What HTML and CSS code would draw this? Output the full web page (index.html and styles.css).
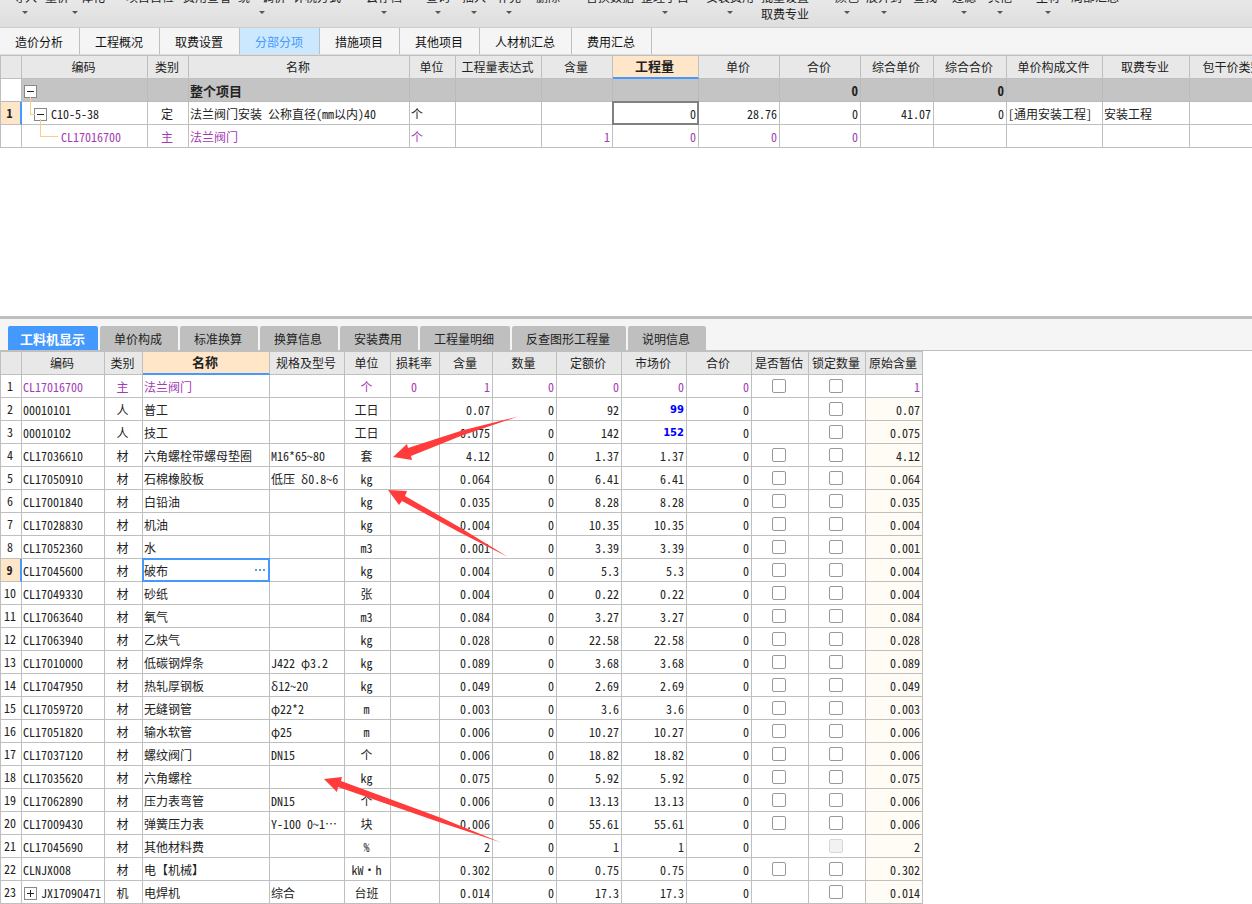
FILE: index.html
```
<!DOCTYPE html>
<html lang="zh-CN">
<head>
<meta charset="utf-8">
<title>分部分项</title>
<link rel="stylesheet" href="styles.css">
</head>
<body>
<header class="toolbar">
  <button class="tool menu">导入</button>
  <button class="tool menu">量价一体化</button>
  <button class="tool">项目自检</button>
  <button class="tool">费用查看</button>
  <button class="tool menu">统一调价</button>
  <button class="tool">计税方式</button>
  <button class="tool menu">云存档</button>
  <button class="tool menu">查询</button>
  <button class="tool menu">插入</button>
  <button class="tool menu">补充</button>
  <button class="tool">删除</button>
  <button class="tool">替换数据</button>
  <button class="tool menu">整理子目</button>
  <button class="tool menu">安装费用</button>
  <button class="tool">批量设置<br>取费专业</button>
  <button class="tool menu">颜色</button>
  <button class="tool menu">展开到</button>
  <button class="tool">查找</button>
  <button class="tool menu">过滤</button>
  <button class="tool menu">其他</button>
  <button class="tool menu">主材</button>
  <button class="tool">局部汇总</button>
</header>
<nav class="pages">
  <button class="page">造价分析</button>
  <button class="page">工程概况</button>
  <button class="page">取费设置</button>
  <button class="page active">分部分项</button>
  <button class="page">措施项目</button>
  <button class="page">其他项目</button>
  <button class="page">人材机汇总</button>
  <button class="page">费用汇总</button>
</nav>
<main class="upper">
<table class="grid items">
<colgroup><col class="w22"><col class="w126"><col class="w41"><col class="w221"><col class="w46"><col class="w86"><col class="w71"><col class="w86"><col class="w81"><col class="w81"><col class="w73"><col class="w73"><col class="w96"><col class="w87"><col class="w88"></colgroup>
<thead><tr><th></th><th>编码</th><th>类别</th><th>名称</th><th>单位</th><th>工程量表达式</th><th>含量</th><th class="current">工程量</th><th>单价</th><th>合价</th><th>综合单价</th><th>综合合价</th><th>单价构成文件</th><th>取费专业</th><th>包干价类别</th></tr></thead>
<tbody>
<tr class="total"><td class="no"></td><td><button class="node" aria-label="折叠"><svg viewBox="0 0 11 11"><path d="M2 5.500h7"/></svg></button></td><td></td><td>整个项目</td><td></td><td></td><td></td><td></td><td></td><td class="n">0</td><td></td><td class="n">0</td><td></td><td></td><td></td></tr>
<tr><td class="no current">1</td><td class="level1"><button class="node" aria-label="折叠"><svg viewBox="0 0 11 11"><path d="M2 5.500h7"/></svg></button>C10-5-38</td><td class="c">定</td><td>法兰阀门安装 公称直径(mm以内)40</td><td>个</td><td></td><td></td><td class="edit gray"><input aria-label="工程量" value="0"></td><td class="n">28.76</td><td class="n">0</td><td class="n">41.07</td><td class="n">0</td><td>[通用安装工程]</td><td>安装工程</td><td></td></tr>
<tr class="main"><td class="no"></td><td class="level2">CL17016700</td><td class="c">主</td><td>法兰阀门</td><td>个</td><td></td><td class="n">1</td><td class="n">0</td><td class="n">0</td><td class="n">0</td><td></td><td></td><td></td><td></td><td></td></tr>
</tbody>
</table>
</main>
<section class="lower">
<nav class="panes">
  <button class="pane active">工料机显示</button>
  <button class="pane">单价构成</button>
  <button class="pane">标准换算</button>
  <button class="pane">换算信息</button>
  <button class="pane">安装费用</button>
  <button class="pane">工程量明细</button>
  <button class="pane">反查图形工程量</button>
  <button class="pane">说明信息</button>
</nav>
<table class="grid parts">
<colgroup><col class="w22"><col class="w83"><col class="w38"><col class="w127"><col class="w75"><col class="w46"><col class="w49"><col class="w53"><col class="w64"><col class="w65"><col class="w65"><col class="w65"><col class="w57"><col class="w57"><col class="w57"></colgroup>
<thead><tr><th></th><th>编码</th><th>类别</th><th class="current">名称</th><th>规格及型号</th><th>单位</th><th>损耗率</th><th>含量</th><th>数量</th><th>定额价</th><th>市场价</th><th>合价</th><th>是否暂估</th><th>锁定数量</th><th>原始含量</th></tr></thead>
<tbody>
<tr class="main"><td class="no">1</td><td>CL17016700</td><td class="c">主</td><td>法兰阀门</td><td></td><td class="c">个</td><td class="c">0</td><td class="n">1</td><td class="n">0</td><td class="n">0</td><td class="n">0</td><td class="n">0</td><td class="c"><input type="checkbox" aria-label="是否暂估"></td><td class="c"><input type="checkbox" aria-label="锁定数量"></td><td class="n">1</td></tr>
<tr><td class="no">2</td><td>00010101</td><td class="c">人</td><td>普工</td><td></td><td class="c">工日</td><td></td><td class="n">0.07</td><td class="n">0</td><td class="n">92</td><td class="n changed">99</td><td class="n">0</td><td></td><td class="c"><input type="checkbox" aria-label="锁定数量"></td><td class="n origin">0.07</td></tr>
<tr><td class="no">3</td><td>00010102</td><td class="c">人</td><td>技工</td><td></td><td class="c">工日</td><td></td><td class="n">0.075</td><td class="n">0</td><td class="n">142</td><td class="n changed">152</td><td class="n">0</td><td></td><td class="c"><input type="checkbox" aria-label="锁定数量"></td><td class="n origin">0.075</td></tr>
<tr><td class="no">4</td><td>CL17036610</td><td class="c">材</td><td>六角螺栓带螺母垫圈</td><td>M16*65~80</td><td class="c">套</td><td></td><td class="n">4.12</td><td class="n">0</td><td class="n">1.37</td><td class="n">1.37</td><td class="n">0</td><td class="c"><input type="checkbox" aria-label="是否暂估"></td><td class="c"><input type="checkbox" aria-label="锁定数量"></td><td class="n origin">4.12</td></tr>
<tr><td class="no">5</td><td>CL17050910</td><td class="c">材</td><td>石棉橡胶板</td><td>低压 δ0.8~6</td><td class="c">kg</td><td></td><td class="n">0.064</td><td class="n">0</td><td class="n">6.41</td><td class="n">6.41</td><td class="n">0</td><td class="c"><input type="checkbox" aria-label="是否暂估"></td><td class="c"><input type="checkbox" aria-label="锁定数量"></td><td class="n origin">0.064</td></tr>
<tr><td class="no">6</td><td>CL17001840</td><td class="c">材</td><td>白铅油</td><td></td><td class="c">kg</td><td></td><td class="n">0.035</td><td class="n">0</td><td class="n">8.28</td><td class="n">8.28</td><td class="n">0</td><td class="c"><input type="checkbox" aria-label="是否暂估"></td><td class="c"><input type="checkbox" aria-label="锁定数量"></td><td class="n origin">0.035</td></tr>
<tr><td class="no">7</td><td>CL17028830</td><td class="c">材</td><td>机油</td><td></td><td class="c">kg</td><td></td><td class="n">0.004</td><td class="n">0</td><td class="n">10.35</td><td class="n">10.35</td><td class="n">0</td><td class="c"><input type="checkbox" aria-label="是否暂估"></td><td class="c"><input type="checkbox" aria-label="锁定数量"></td><td class="n origin">0.004</td></tr>
<tr><td class="no">8</td><td>CL17052360</td><td class="c">材</td><td>水</td><td></td><td class="c">m3</td><td></td><td class="n">0.001</td><td class="n">0</td><td class="n">3.39</td><td class="n">3.39</td><td class="n">0</td><td class="c"><input type="checkbox" aria-label="是否暂估"></td><td class="c"><input type="checkbox" aria-label="锁定数量"></td><td class="n origin">0.001</td></tr>
<tr><td class="no current">9</td><td>CL17045600</td><td class="c">材</td><td class="edit"><input aria-label="名称" value="破布"><button class="more" aria-label="选择"><svg viewBox="0 0 11 2"><path d="M1 0h2v2h-2zM5 0h2v2h-2zM9 0h2v2h-2z"/></svg></button></td><td></td><td class="c">kg</td><td></td><td class="n">0.004</td><td class="n">0</td><td class="n">5.3</td><td class="n">5.3</td><td class="n">0</td><td class="c"><input type="checkbox" aria-label="是否暂估"></td><td class="c"><input type="checkbox" aria-label="锁定数量"></td><td class="n origin">0.004</td></tr>
<tr><td class="no">10</td><td>CL17049330</td><td class="c">材</td><td>砂纸</td><td></td><td class="c">张</td><td></td><td class="n">0.004</td><td class="n">0</td><td class="n">0.22</td><td class="n">0.22</td><td class="n">0</td><td class="c"><input type="checkbox" aria-label="是否暂估"></td><td class="c"><input type="checkbox" aria-label="锁定数量"></td><td class="n origin">0.004</td></tr>
<tr><td class="no">11</td><td>CL17063640</td><td class="c">材</td><td>氧气</td><td></td><td class="c">m3</td><td></td><td class="n">0.084</td><td class="n">0</td><td class="n">3.27</td><td class="n">3.27</td><td class="n">0</td><td class="c"><input type="checkbox" aria-label="是否暂估"></td><td class="c"><input type="checkbox" aria-label="锁定数量"></td><td class="n origin">0.084</td></tr>
<tr><td class="no">12</td><td>CL17063940</td><td class="c">材</td><td>乙炔气</td><td></td><td class="c">kg</td><td></td><td class="n">0.028</td><td class="n">0</td><td class="n">22.58</td><td class="n">22.58</td><td class="n">0</td><td class="c"><input type="checkbox" aria-label="是否暂估"></td><td class="c"><input type="checkbox" aria-label="锁定数量"></td><td class="n origin">0.028</td></tr>
<tr><td class="no">13</td><td>CL17010000</td><td class="c">材</td><td>低碳钢焊条</td><td>J422 φ3.2</td><td class="c">kg</td><td></td><td class="n">0.089</td><td class="n">0</td><td class="n">3.68</td><td class="n">3.68</td><td class="n">0</td><td class="c"><input type="checkbox" aria-label="是否暂估"></td><td class="c"><input type="checkbox" aria-label="锁定数量"></td><td class="n origin">0.089</td></tr>
<tr><td class="no">14</td><td>CL17047950</td><td class="c">材</td><td>热轧厚钢板</td><td>δ12~20</td><td class="c">kg</td><td></td><td class="n">0.049</td><td class="n">0</td><td class="n">2.69</td><td class="n">2.69</td><td class="n">0</td><td class="c"><input type="checkbox" aria-label="是否暂估"></td><td class="c"><input type="checkbox" aria-label="锁定数量"></td><td class="n origin">0.049</td></tr>
<tr><td class="no">15</td><td>CL17059720</td><td class="c">材</td><td>无缝钢管</td><td>φ22*2</td><td class="c">m</td><td></td><td class="n">0.003</td><td class="n">0</td><td class="n">3.6</td><td class="n">3.6</td><td class="n">0</td><td class="c"><input type="checkbox" aria-label="是否暂估"></td><td class="c"><input type="checkbox" aria-label="锁定数量"></td><td class="n origin">0.003</td></tr>
<tr><td class="no">16</td><td>CL17051820</td><td class="c">材</td><td>输水软管</td><td>φ25</td><td class="c">m</td><td></td><td class="n">0.006</td><td class="n">0</td><td class="n">10.27</td><td class="n">10.27</td><td class="n">0</td><td class="c"><input type="checkbox" aria-label="是否暂估"></td><td class="c"><input type="checkbox" aria-label="锁定数量"></td><td class="n origin">0.006</td></tr>
<tr><td class="no">17</td><td>CL17037120</td><td class="c">材</td><td>螺纹阀门</td><td>DN15</td><td class="c">个</td><td></td><td class="n">0.006</td><td class="n">0</td><td class="n">18.82</td><td class="n">18.82</td><td class="n">0</td><td class="c"><input type="checkbox" aria-label="是否暂估"></td><td class="c"><input type="checkbox" aria-label="锁定数量"></td><td class="n origin">0.006</td></tr>
<tr><td class="no">18</td><td>CL17035620</td><td class="c">材</td><td>六角螺栓</td><td></td><td class="c">kg</td><td></td><td class="n">0.075</td><td class="n">0</td><td class="n">5.92</td><td class="n">5.92</td><td class="n">0</td><td class="c"><input type="checkbox" aria-label="是否暂估"></td><td class="c"><input type="checkbox" aria-label="锁定数量"></td><td class="n origin">0.075</td></tr>
<tr><td class="no">19</td><td>CL17062890</td><td class="c">材</td><td>压力表弯管</td><td>DN15</td><td class="c">个</td><td></td><td class="n">0.006</td><td class="n">0</td><td class="n">13.13</td><td class="n">13.13</td><td class="n">0</td><td class="c"><input type="checkbox" aria-label="是否暂估"></td><td class="c"><input type="checkbox" aria-label="锁定数量"></td><td class="n origin">0.006</td></tr>
<tr><td class="no">20</td><td>CL17009430</td><td class="c">材</td><td>弹簧压力表</td><td>Y-100 0~1…</td><td class="c">块</td><td></td><td class="n">0.006</td><td class="n">0</td><td class="n">55.61</td><td class="n">55.61</td><td class="n">0</td><td class="c"><input type="checkbox" aria-label="是否暂估"></td><td class="c"><input type="checkbox" aria-label="锁定数量"></td><td class="n origin">0.006</td></tr>
<tr><td class="no">21</td><td>CL17045690</td><td class="c">材</td><td>其他材料费</td><td></td><td class="c">%</td><td></td><td class="n">2</td><td class="n">0</td><td class="n">1</td><td class="n">1</td><td class="n">0</td><td></td><td class="c"><input type="checkbox" aria-label="锁定数量" disabled></td><td class="n origin">2</td></tr>
<tr><td class="no">22</td><td>CLNJX008</td><td class="c">材</td><td>电【机械】</td><td></td><td class="c">kW·h</td><td></td><td class="n">0.302</td><td class="n">0</td><td class="n">0.75</td><td class="n">0.75</td><td class="n">0</td><td class="c"><input type="checkbox" aria-label="是否暂估"></td><td class="c"><input type="checkbox" aria-label="锁定数量"></td><td class="n origin">0.302</td></tr>
<tr><td class="no">23</td><td><button class="node" aria-label="展开"><svg viewBox="0 0 11 11"><path d="M2 5.500h7M5.500 2v7"/></svg></button>JX17090471</td><td class="c">机</td><td>电焊机</td><td>综合</td><td class="c">台班</td><td></td><td class="n">0.014</td><td class="n">0</td><td class="n">17.3</td><td class="n">17.3</td><td class="n">0</td><td></td><td class="c"><input type="checkbox" aria-label="锁定数量"></td><td class="n origin">0.014</td></tr>
</tbody>
</table>
<svg class="marks" viewBox="0 0 520 588" aria-hidden="true">
  <path d="M393 141 407 128 408 132 462 114.500 518 100.500 462 119.500 411 140 412 144Z"/>
  <path d="M388 174 407 175 405 180 460 211.500 508 241 458 215.500 402 185 399 189Z"/>
  <path d="M324 463 342 461 341 465 440 501.500 501 526.500 436 505 338 471 337 476Z"/>
</svg>
</section>
</body>
</html>
```
FILE: styles.css
```
* { box-sizing: border-box; }

body {
  margin: 0;
  min-height: 100vh;
  display: flex;
  flex-direction: column;
  overflow-x: hidden;
  background: #fff;
  color: #222;
  font: 12px/16px "Noto Sans CJK SC", sans-serif;
}

button, input {
  margin: 0;
  padding: 0;
  border: 0;
  background: none;
  color: inherit;
  font: inherit;
}

/* toolbar */
.toolbar {
  height: 28px;
  display: grid;
  grid-template-columns: 32px 81px 57px 55px 55px 73px 60px 36px 35px 39px 50px 55px 65px 55px 74px 31px 47px 39px 36px 48px 35px 60px;
  padding-left: 13px;
  align-items: start;
  justify-items: start;
  overflow: hidden;
  background: linear-gradient(#e8e8e8, #dedede);
  border-bottom: 1px solid #cdcdcd;
}
.tool {
  margin-top: -12px;
  height: 36px;
  display: flex;
  flex-direction: column;
  align-items: center;
  line-height: 17px;
  white-space: nowrap;
}
.menu::after {
  content: "";
  margin-top: 6px;
  border: 3px solid transparent;
  border-top-color: #555;
  border-bottom: 0;
}

/* page tabs */
.pages {
  display: flex;
  height: 27px;
  background: #f5f5f5;
  border-bottom: 1px solid #dcdcdc;
}
.page {
  padding: 2px 16px 0 15px;
  border-right: 1px solid #bfbfbf;
  color: #111;
}
.page.active { background: #cce8ff; color: #4499ff; }

/* grids */
.grid {
  table-layout: fixed;
  border-spacing: 0;
  border-top: 1px solid #bfbfbf;
  font-feature-settings: "hwid";
}
.items { width: 1278px; }
.parts { width: 923px; }
.grid th, .grid td {
  height: 23px;
  padding: 1px 2px 0 1px;
  border-right: 1px solid #bfbfbf;
  border-bottom: 1px solid #bfbfbf;
  white-space: nowrap;
  overflow: hidden;
  text-align: left;
}
.grid th { background: #e8e8e8; font-weight: 400; text-align: center; padding: 0 2px 1px 0; }
.grid th:first-child, .grid td:first-child { border-left: 1px solid #bfbfbf; }
.grid th.current {
  background: #ffe6c8;
  border-bottom: 2px solid #4499ff;
  font-size: 13px;
  font-weight: 700;
}
.grid .c { text-align: center; padding: 1px 2px 0 0; }
.grid .n { text-align: right; }
.grid .no { text-align: center; padding: 0 2px 0 0; background: #fff; }
.grid .no.current {
  background: #ffe6c8;
  border-right: 2px solid #4499ff;
  font-weight: 700;
}
.total td { background: #c4c4c4; border-color: #bbb; font-size: 13px; font-weight: 700; }
.main td { color: #a33cb4; }
.main .no { color: #222; }
.grid .changed { color: #00f; font: 700 10px/16px "DejaVu Sans", sans-serif; }
.origin { background: #fffbf5; }

.w22 { width: 22px; }
.w38 { width: 38px; }
.w41 { width: 41px; }
.w46 { width: 46px; }
.w49 { width: 49px; }
.w53 { width: 53px; }
.w57 { width: 57px; }
.w64 { width: 64px; }
.w65 { width: 65px; }
.w71 { width: 71px; }
.w73 { width: 73px; }
.w75 { width: 75px; }
.w81 { width: 81px; }
.w83 { width: 83px; }
.w86 { width: 86px; }
.w87 { width: 87px; }
.w88 { width: 88px; }
.w96 { width: 96px; }
.w126 { width: 126px; }
.w127 { width: 127px; }
.w221 { width: 221px; }

/* tree cells */
.node {
  width: 13px;
  height: 13px;
  margin: 0 4px 0 1px;
  display: inline-block;
  vertical-align: -1px;
  border: 1px solid #888;
  background: #fff;
}
.node svg { display: block; width: 11px; height: 11px; fill: none; stroke: #222; }
.grid .level1, .grid .level2 { position: relative; overflow: visible; }
.grid .level1 { padding-left: 11px; }
.grid .level2 { padding-left: 39px; }
.level1::before, .level2::before {
  content: "";
  position: absolute;
  border: solid #ffcc88;
  border-width: 0 0 1px 1px;
}
.level1::before { left: 8px; top: -5px; width: 4px; height: 17px; }
.level2::before { left: 18px; top: -6px; width: 17px; height: 17px; }

/* cell editors */
.grid .edit { position: relative; overflow: visible; }
.edit input {
  position: absolute;
  inset: -1px;
  width: calc(100% + 2px);
  height: 24px;
  padding: 1px 1px 0 0;
  border: 2px solid #4499ff;
  background: #fff;
  outline: 0;
  font-feature-settings: inherit;
}
.edit.gray input { border-color: #808080; text-align: right; }
.more {
  position: absolute;
  right: 4px;
  top: 0;
  height: 21px;
}
.more svg { display: block; width: 11px; height: 2px; fill: #5aa0dc; }

input[type="checkbox"] {
  appearance: none;
  width: 14px;
  height: 14px;
  display: block;
  margin: 0 auto 2px;
  border: 1px solid #999;
  border-radius: 2px;
  background: #fff;
}
input[type="checkbox"]:disabled { border-color: #d6d6d6; background: #f2f2f2; }

/* panels */
.upper { flex: 1; overflow: hidden; }
.lower { position: relative; border-top: 3px solid #bfbfbf; }
.panes {
  display: flex;
  gap: 2px;
  padding: 7px 8px 0;
  background: #f5f5f5;
  border-bottom: 1px solid #bfbfbf;
}
.pane {
  height: 24px;
  padding: 2px 16px 0 14px;
  border-radius: 2px 2px 0 0;
  background: #bfbfbf;
}
.pane.active {
  padding: 2px 13px 0 12px;
  background: #4499ff;
  color: #fff;
  font-size: 13px;
  font-weight: 700;
}
.marks {
  position: absolute;
  left: 0;
  top: -3px;
  width: 520px;
  height: 588px;
  fill: #ff3b3b;
  pointer-events: none;
}
```
